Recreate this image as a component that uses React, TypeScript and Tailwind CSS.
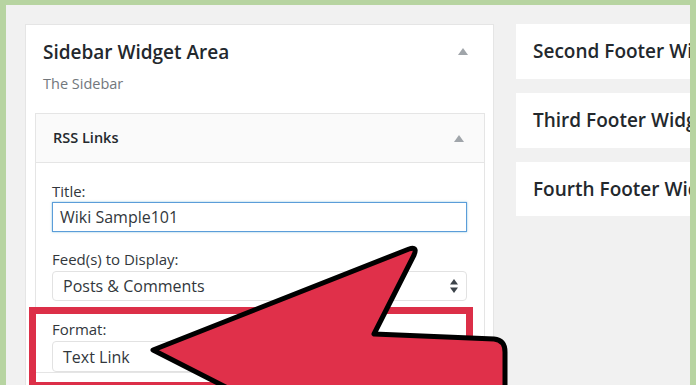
const Caret = ({ className = "" }: { className?: string }) => (
  <svg width="10" height="7" viewBox="0 0 10 7" className={className}>
    <polygon points="5,0 10,7 0,7" fill="#a0a5aa" />
  </svg>
);

const UpDown = () => (
  <svg width="8" height="14" viewBox="0 0 8 14">
    <polygon points="4,0 8,5.5 0,5.5" fill="#3c434a" />
    <polygon points="0,8.5 8,8.5 4,14" fill="#3c434a" />
  </svg>
);

function LeftPanel() {
  return (
    <div className="w-[469px] shrink-0 self-start border border-[#e5e5e5] bg-white pb-10">
      <div className="flex items-center justify-between pl-[17px] pr-[25px] pt-[14px]">
        <h2 className="text-[19px] font-semibold leading-[26px] text-[#23282d]">Sidebar Widget Area</h2>
        <Caret className="-mt-[2px]" />
      </div>
      <p className="mt-[9px] pl-[17px] text-[14.5px] leading-[20px] text-[#72777c]">The Sidebar</p>

      <div className="ml-[9px] mt-[19px] w-[450px] border border-[#e5e5e5]">
        <div className="flex h-[49px] items-center justify-between border-b border-[#e5e5e5] bg-[#fafafa] pl-[17px] pr-[20px]">
          <span className="text-[14.5px] font-semibold text-[#23282d]">RSS Links</span>
          <Caret />
        </div>
        <div className="pl-[16px] pt-[18px]">
          <label className="block text-[15px] leading-[20px] text-[#32373c]">Title:</label>
          <div className="mt-[1px] flex h-[30px] w-[415px] items-center border border-[#5b9dd9] pl-[7px] text-[16px] text-[#32373c] shadow-[0_0_2px_rgba(30,140,190,0.5)]">
            Wiki Sample101
          </div>

          <label className="mt-[17px] block text-[15px] leading-[20px] text-[#32373c]">Feed(s) to Display:</label>
          <div className="mt-[2px] flex h-[30px] w-[415px] items-center justify-between rounded-[4px] border border-[#e2e2e2] pl-[10px] pr-[8px] text-[16px] text-[#32373c]">
            <span>Posts &amp; Comments</span>
            <UpDown />
          </div>

          <label className="mt-[18px] block text-[15px] leading-[20px] text-[#32373c]">Format:</label>
          <div className="mt-[2px] flex h-[31px] w-[415px] items-center rounded-[4px] border border-[#e2e2e2] pl-[10px] text-[16px] text-[#32373c]">
            Text Link
          </div>
        </div>
      </div>
    </div>
  );
}

function FooterPanel({ title, h }: { title: string; h: string }) {
  return (
    <div className={`flex ${h} items-center bg-white pl-[17px]`}>
      <span className="whitespace-nowrap text-[19px] font-semibold text-[#23282d]">{title}</span>
    </div>
  );
}

export default function App() {
  return (
    <div className="relative h-[385px] w-[696px] overflow-hidden bg-[#b7d4a1] px-[6px] pt-[5px] font-['Open_Sans',sans-serif]">
      <div className="flex h-full gap-[22px] overflow-hidden bg-[#f1f1f1] pl-[19px] pt-[19px]">
        <LeftPanel />
        <div className="flex w-[220px] shrink-0 flex-col gap-[14px]">
          <FooterPanel title="Second Footer Widget Area" h="h-[55px]" />
          <FooterPanel title="Third Footer Widget Area" h="h-[55px]" />
          <FooterPanel title="Fourth Footer Widget Area" h="h-[54px]" />
        </div>
      </div>

      {/* highlight box */}
      <div className="absolute left-[29px] top-[307px] h-[82px] w-[444px] border-[7px] border-[#dc2f48]" />

      {/* pointer arrow */}
      <svg className="absolute left-0 top-0" width="696" height="385" viewBox="0 0 696 385">
        <path
          d="M153,350 L409,249 Q418,246 414,255 L374,334 L494,339 Q505,340 505,352 L505,430 L310,430 Z"
          fill="#e0304a"
          stroke="#000"
          strokeWidth="5"
          strokeLinejoin="round"
        />
      </svg>
    </div>
  );
}
